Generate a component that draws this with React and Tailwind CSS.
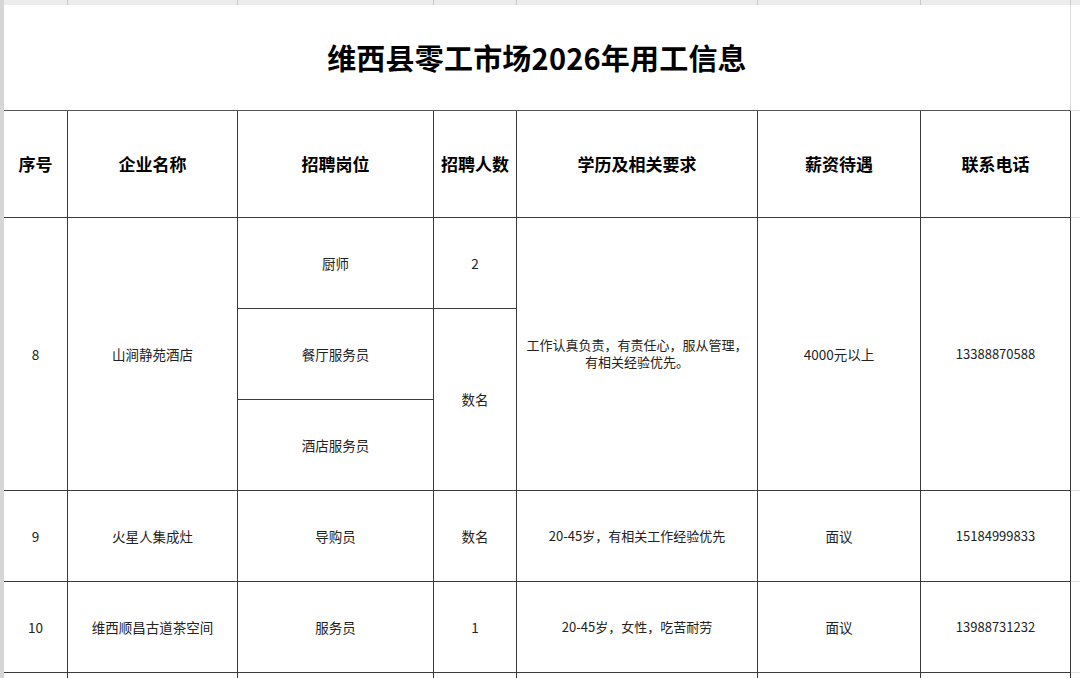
const cols = [64, 170, 196, 83, 241, 163, 150];

const headers = ['序号', '企业名称', '招聘岗位', '招聘人数', '学历及相关要求', '薪资待遇', '联系电话'];

const Cell = ({ className = '', children }) => (
  <div className={`flex items-center justify-center text-center border-r border-b border-[#3a3a3a] ${className}`}>
    {children}
  </div>
);

const App = () => {
  return (
    <div
      className="w-[1080px] h-[678px] overflow-hidden bg-white flex flex-col text-[#222]"
      style={{ fontFamily: '"Noto Sans CJK SC", "Noto Sans", sans-serif' }}
    >
      {/* spreadsheet gridline strip */}
      <div className="h-[5px] flex bg-[#ececec] shrink-0">
        <div className="w-[4px] bg-[#d6d6d6]" />
        {cols.map((w, i) => (
          <div key={i} style={{ width: w }} className="border-r border-[#c9c9c9]" />
        ))}
        <div className="flex-1" />
      </div>

      <div className="flex flex-1 min-h-0">
        <div className="w-[4px] bg-[#d6d6d6] shrink-0" />

        <div className="w-[1067px] shrink-0 flex flex-col">
          <div className="h-[106px] shrink-0 flex items-center justify-center border-b border-r border-b-[#555] border-r-[#dcdcdc]">
            <h1 className="text-[29px] font-bold text-black tracking-[0.2px]">维西县零工市场2026年用工信息</h1>
          </div>

          <div className="grid grid-cols-[64px_170px_196px_83px_241px_163px_150px] grid-rows-[107px_91px_91px_91px_91px_91px_91px] text-[13.5px]">
            {headers.map((h) => (
              <Cell key={h} className="text-[17px] font-bold text-black">{h}</Cell>
            ))}

            <Cell className="row-span-3">8</Cell>
            <Cell className="row-span-3">山涧静苑酒店</Cell>
            <Cell>厨师</Cell>
            <Cell>2</Cell>
            <Cell className="row-span-3 text-[13px] leading-[17px] pb-[2px]">
              <span>
                工作认真负责，有责任心，服从管理，
                <br />
                有相关经验优先。
              </span>
            </Cell>
            <Cell className="row-span-3">4000元以上</Cell>
            <Cell className="row-span-3 text-[13px]">13388870588</Cell>
            <Cell>餐厅服务员</Cell>
            <Cell className="row-span-2">数名</Cell>
            <Cell>酒店服务员</Cell>

            <Cell>9</Cell>
            <Cell>火星人集成灶</Cell>
            <Cell>导购员</Cell>
            <Cell>数名</Cell>
            <Cell className="text-[13px]">20-45岁，有相关工作经验优先</Cell>
            <Cell>面议</Cell>
            <Cell className="text-[13px]">15184999833</Cell>

            <Cell>10</Cell>
            <Cell>维西顺昌古道茶空间</Cell>
            <Cell>服务员</Cell>
            <Cell>1</Cell>
            <Cell className="text-[13px]">20-45岁，女性，吃苦耐劳</Cell>
            <Cell>面议</Cell>
            <Cell className="text-[13px]">13988731232</Cell>

            {cols.map((w, i) => (
              <Cell key={`e${i}`} />
            ))}
          </div>
        </div>

        {/* right margin gridlines */}
        <div className="flex-1 flex flex-col">
          <div className="h-[106px] shrink-0 border-b border-[#e2e2e2]" />
          <div className="h-[107px] shrink-0 border-b border-[#e2e2e2]" />
          <div className="h-[91px] shrink-0" />
          <div className="h-[91px] shrink-0" />
          <div className="h-[91px] shrink-0 border-b border-[#e2e2e2]" />
          <div className="h-[91px] shrink-0 border-b border-[#e2e2e2]" />
          <div className="h-[91px] shrink-0 border-b border-[#e2e2e2]" />
        </div>
      </div>
    </div>
  );
};

export default App;
